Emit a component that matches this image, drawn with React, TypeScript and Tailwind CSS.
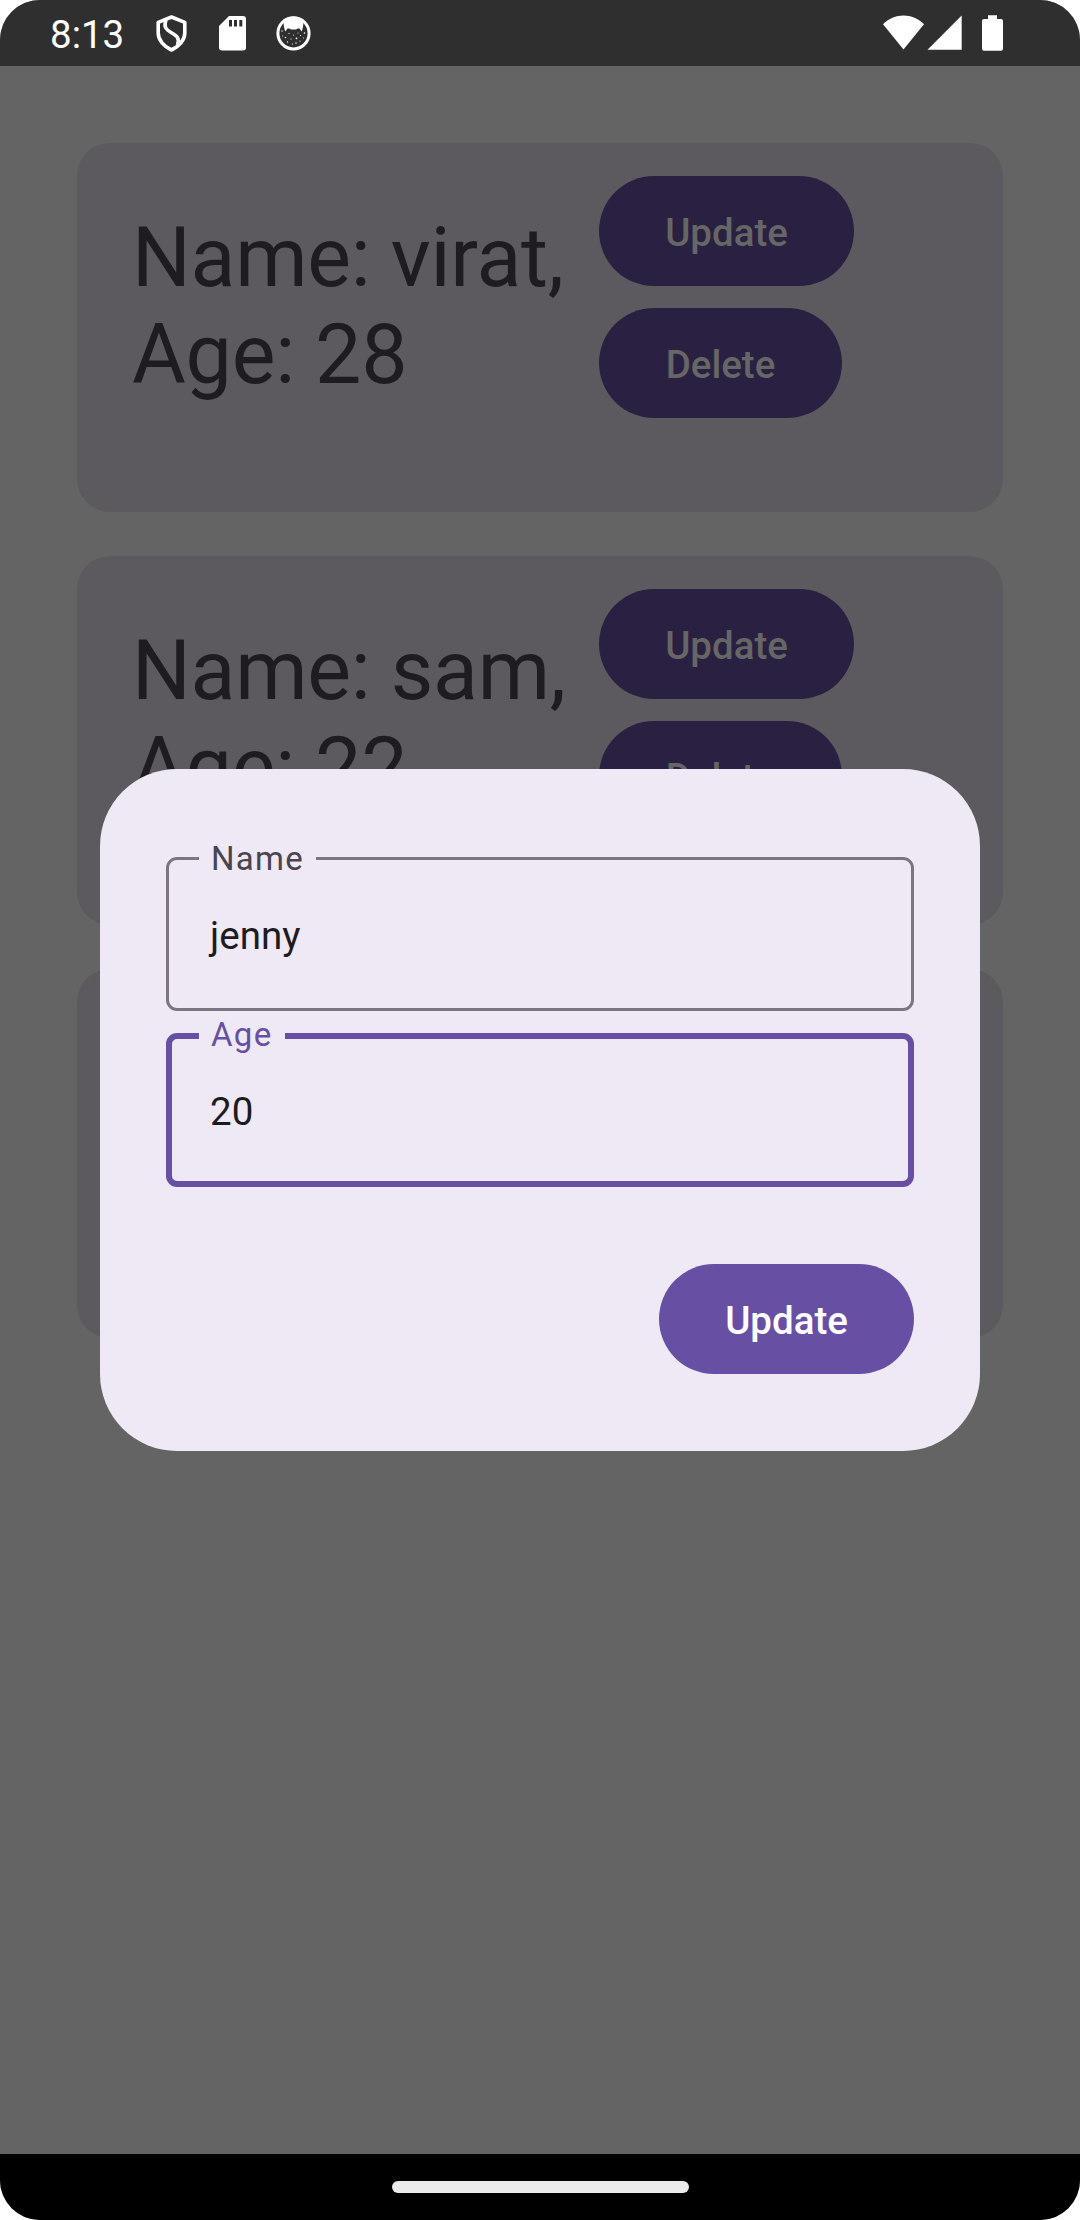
type Person = { name: string; age: number };

const people: Person[] = [
  { name: "virat", age: 28 },
  { name: "sam", age: 22 },
];

function PillButton({ label, className }: { label: string; className: string }) {
  return (
    <button
      className={`flex h-[110px] items-center justify-center rounded-full text-[38.5px] leading-[55px] font-medium ${className}`}
    >
      <span className="relative top-[1.5px]">{label}</span>
    </button>
  );
}

function PersonCard({ person }: { person?: Person }) {
  return (
    <article className="flex h-[369px] shrink-0 rounded-[33px] bg-[#5c5a5f]">
      {person && (
        <>
          <div className="ml-[55px] w-[467px] shrink-0 pt-[66px] text-[82.5px] leading-[97px] tracking-[-0.25px] whitespace-nowrap text-[#1e1c21]">
            <p>Name: {person.name},</p>
            <p>Age: {person.age}</p>
          </div>
          <div className="flex flex-col items-start gap-[22px] pt-[33px]">
            <PillButton label="Update" className="w-[255px] bg-[#2a2041] text-[#666666]" />
            <PillButton label="Delete" className="w-[243px] bg-[#2a2041] text-[#666666]" />
          </div>
        </>
      )}
    </article>
  );
}

function StatusBar() {
  return (
    <header className="flex h-[66px] shrink-0 items-center bg-[#2f2f2f] pl-[50px] text-white">
      <span className="w-[104px] pt-[3px] text-[38.5px] leading-[66px]">8:13</span>
      <svg className="-ml-px h-[66px] w-[40px]" viewBox="153 0 40 66" fill="none" stroke="white">
        <path d="M171.5 17 L184.8 22.3 V33 C184.8 40 179 46.5 171.5 50 C164 46.5 158.2 40 158.2 33 V22.3 Z" strokeWidth="3.6" strokeLinejoin="round" />
        <path d="M166 20 C163.5 27 166 29.5 171 32.5 C177 36 180 38 177.5 45" strokeWidth="3.6" />
      </svg>
      <svg className="ml-[22px] h-[66px] w-[36px]" viewBox="215 0 36 66">
        <path d="M229 16 H243 Q246 16 246 19 V47.5 Q246 50.5 243 50.5 H222 Q219 50.5 219 47.5 V26 Z" fill="white" />
        <path d="M229 20 H232 V26.5 H229 Z M234 20 H237 V26.5 H234 Z M239.3 20 H242.3 V26.5 H239.3 Z" fill="#2f2f2f" />
      </svg>
      <svg className="ml-[22px] h-[66px] w-[40px]" viewBox="273 0 40 66">
        <circle cx="293.5" cy="33.3" r="15.6" fill="#2f2f2f" stroke="white" strokeWidth="3" />
        <path d="M283.5 19.5 Q293.5 13.5 303.5 19.5 C303.5 25 303 28 301.7 31.5 L299.5 28.5 H297.5 L296 29.5 H291 L289.5 28.5 H287.5 L285.3 31.5 C284 28 283.5 25 283.5 19.5 Z" fill="white" />
        <g fill="white">
          <circle cx="282" cy="31" r=".7" />
          <circle cx="285.5" cy="37.5" r=".8" />
          <circle cx="289" cy="33.5" r=".6" />
          <circle cx="282.5" cy="36" r=".5" />
          <circle cx="287.5" cy="42" r=".7" />
          <circle cx="291" cy="39" r=".6" />
          <circle cx="293.5" cy="35" r=".5" />
          <circle cx="296.5" cy="38.3" r=".9" />
          <circle cx="292.5" cy="44" r=".6" />
          <circle cx="296" cy="43" r=".7" />
          <circle cx="300" cy="41" r=".6" />
          <circle cx="300.5" cy="35.5" r=".7" />
          <circle cx="304.5" cy="33" r=".8" />
          <circle cx="303.5" cy="38" r=".5" />
          <circle cx="298" cy="33" r=".5" />
        </g>
      </svg>
      <svg className="mr-[74px] ml-auto h-[66px] w-[126px]" viewBox="880 0 126 66" fill="white">
        <path d="M883 24.3 C894 12.6 913 12.6 924 24.3 L903.5 49.5 Z" />
        <path d="M961.7 15.5 V49.7 H927.5 Z" />
        <path d="M988 15.3 H997 V19 H1001 Q1003 19 1003 21 V48.5 Q1003 50.7 1001 50.7 H984 Q982 50.7 982 48.5 V21 Q982 19 984 19 H988 Z" />
      </svg>
    </header>
  );
}

function OutlinedField({ label, value, focused = false }: { label: string; value: string; focused?: boolean }) {
  return (
    <div
      className={
        focused
          ? "relative flex h-[154px] items-center rounded-[11px] border-[6px] border-[#6750a4] px-[38px] text-[#6750a4]"
          : "relative flex h-[154px] items-center rounded-[11px] border-[3px] border-[#7c757f] px-[41px] text-[#49454f]"
      }
    >
      <span
        className={
          focused
            ? "absolute -top-[6px] left-[27px] flex h-[6px] w-[86px] items-start bg-[#eee9f4] pl-[12px] text-[33px] leading-[39px] tracking-[1.3px]"
            : "absolute -top-[3px] left-[30px] flex h-[3px] w-[117px] items-start bg-[#eee9f4] pl-[12px] text-[33px] leading-[39px] tracking-[1.3px]"
        }
      >
        <span className="-mt-[18px]">{label}</span>
      </span>
      <span className="relative top-[1.5px] text-[38.5px] leading-[55px] text-[#1d1b20]">{value}</span>
    </div>
  );
}

export default function App() {
  return (
    <div className="h-[2220px] w-[1080px] bg-white font-['Roboto',sans-serif]">
      <div className="relative flex h-full flex-col overflow-hidden rounded-[40px] bg-[#646464]">
        <StatusBar />
        <main className="flex flex-1 flex-col gap-[44px] px-[77px] pt-[77px]">
          {people.map((person) => (
            <PersonCard key={person.name} person={person} />
          ))}
          <PersonCard />
        </main>
        <footer className="flex h-[66px] shrink-0 items-center justify-center bg-black">
          <div className="h-[12px] w-[297px] rounded-full bg-[#ebebeb]" />
        </footer>
        <section
          role="dialog"
          className="absolute top-[769px] left-[100px] flex h-[682px] w-[880px] flex-col gap-[22px] rounded-[77px] bg-[#eee9f4] px-[66px] pt-[88px]"
        >
          <OutlinedField label="Name" value="jenny" />
          <OutlinedField label="Age" value="20" focused />
          <div className="flex justify-end pt-[55px]">
            <PillButton label="Update" className="w-[255px] bg-[#6750a4] text-white" />
          </div>
        </section>
      </div>
    </div>
  );
}
